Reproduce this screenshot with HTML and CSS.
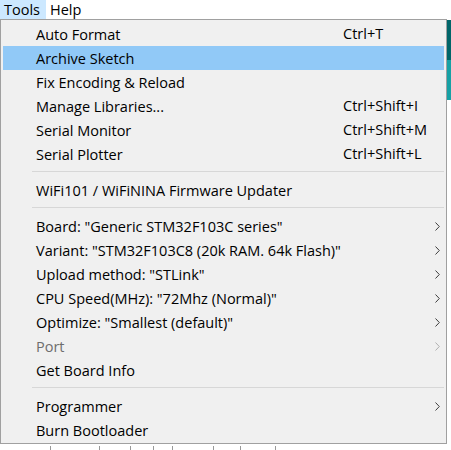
FILE: index.html
```html
<!DOCTYPE html>
<html>
<head>
<meta charset="utf-8">
<link rel="stylesheet" href="styles.css">
</head>
<body>
<div class="menubar">
  <span class="mb-item active">Tools</span>
  <span class="mb-item">Help</span>
</div>
<div class="main">
  <div class="menu">
    <div class="item"><span class="label">Auto Format</span><span class="key">Ctrl+T</span></div>
    <div class="item hl"><span class="label">Archive Sketch</span></div>
    <div class="item"><span class="label">Fix Encoding &amp; Reload</span></div>
    <div class="item"><span class="label">Manage Libraries...</span><span class="key">Ctrl+Shift+I</span></div>
    <div class="item"><span class="label">Serial Monitor</span><span class="key">Ctrl+Shift+M</span></div>
    <div class="item"><span class="label">Serial Plotter</span><span class="key">Ctrl+Shift+L</span></div>
    <div class="sep"></div>
    <div class="item"><span class="label">WiFi101 / WiFiNINA Firmware Updater</span></div>
    <div class="sep"></div>
    <div class="item"><span class="label">Board: "Generic STM32F103C series"</span><svg class="arrow" viewBox="0 0 5 9"><polyline points="0.5,0.5 4.3,4.5 0.5,8.5"/></svg></div>
    <div class="item"><span class="label">Variant: "STM32F103C8 (20k RAM. 64k Flash)"</span><svg class="arrow" viewBox="0 0 5 9"><polyline points="0.5,0.5 4.3,4.5 0.5,8.5"/></svg></div>
    <div class="item"><span class="label">Upload method: "STLink"</span><svg class="arrow" viewBox="0 0 5 9"><polyline points="0.5,0.5 4.3,4.5 0.5,8.5"/></svg></div>
    <div class="item"><span class="label">CPU Speed(MHz): "72Mhz (Normal)"</span><svg class="arrow" viewBox="0 0 5 9"><polyline points="0.5,0.5 4.3,4.5 0.5,8.5"/></svg></div>
    <div class="item"><span class="label">Optimize: "Smallest (default)"</span><svg class="arrow" viewBox="0 0 5 9"><polyline points="0.5,0.5 4.3,4.5 0.5,8.5"/></svg></div>
    <div class="item disabled"><span class="label">Port</span><svg class="arrow" viewBox="0 0 5 9"><polyline points="0.5,0.5 4.3,4.5 0.5,8.5"/></svg></div>
    <div class="item"><span class="label">Get Board Info</span></div>
    <div class="sep"></div>
    <div class="item"><span class="label">Programmer</span><svg class="arrow" viewBox="0 0 5 9"><polyline points="0.5,0.5 4.3,4.5 0.5,8.5"/></svg></div>
    <div class="item"><span class="label">Burn Bootloader</span></div>
  </div>
  <div class="edge">
    <div class="teal-dark"></div>
    <div class="teal-light"></div>
  </div>
</div>
<div class="below">
  <i class="tick t1"></i><i class="tick t2"></i><i class="tick t3"></i><i class="tick t4"></i><i class="tick t5"></i><i class="tick t6"></i><i class="tick t7"></i><i class="tick t8"></i>
</div>
</body>
</html>
```
FILE: styles.css
```css
html, body {
  margin: 0;
  padding: 0;
}
body {
  width: 451px;
  height: 450px;
  overflow: hidden;
  background: #ffffff;
  font-family: "Open Sans", "Noto Sans", sans-serif;
  font-size: 14.5px;
  color: #000;
}
.menubar {
  display: flex;
  height: 19px;
  align-items: stretch;
  background: #fff;
}
.mb-item {
  display: flex;
  align-items: center;
  padding: 0 5px 0 3px;
  line-height: 17px;
  border: 1px solid transparent;
}
.mb-item.active {
  background: #cce8ff;
  border-color: #cce8ff;
}
.main {
  display: flex;
  align-items: flex-start;
}
.menu {
  width: 441px;
  background: #f0f0f0;
  border: 1px solid #a0a0a0;
  padding: 2px 2px 1px 2px;
}
.item {
  position: relative;
  height: 24px;
  display: flex;
  align-items: center;
}
.item.hl {
  background: #91c9f7;
}
.label {
  padding-left: 33px;
  white-space: nowrap;
}
.key {
  position: absolute;
  left: 340px;
  top: 0;
  line-height: 24px;
  white-space: nowrap;
}
.item.disabled {
  color: #6d6d6d;
}
.arrow {
  position: absolute;
  left: 432px;
  top: 8px;
  width: 5px;
  height: 9px;
  fill: none;
  stroke: #3c3c3c;
  stroke-width: 1;
}
.item.disabled .arrow {
  stroke: #b0b0b0;
}
.sep {
  height: 12px;
  display: flex;
  align-items: flex-start;
}
.sep::before {
  content: "";
  display: block;
  margin: 5px 0 0 29px;
  height: 1px;
  flex: 1;
  background: #d7d7d7;
}
.edge {
  width: 4px;
  padding-top: 1px;
}
.teal-dark {
  height: 40px;
  background: #006569;
}
.teal-light {
  height: 40px;
  background: #17a1a5;
}
.below {
  height: 6px;
  display: flex;
  align-items: flex-end;
  padding-left: 50px;
  gap: 0;
}
.tick {
  display: block;
  width: 1px;
  height: 4px;
  background: #999;
}
.t1 { margin-left: 0; }
.t2 { margin-left: 48px; }
.t3 { margin-left: 30px; }
.t4 { margin-left: 22px; }
.t5 { margin-left: 18px; }
.t6 { margin-left: 40px; }
.t7 { margin-left: 26px; }
.t8 { margin-left: 34px; }
```
